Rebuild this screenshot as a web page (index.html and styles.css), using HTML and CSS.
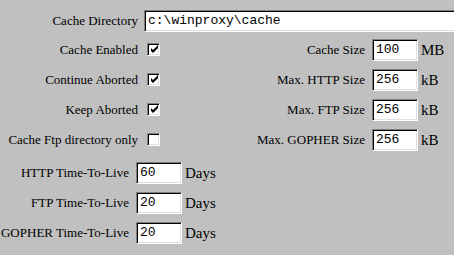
FILE: index.html
```html
<!DOCTYPE html>
<html>
<head>
<title>Cache Settings</title>
<link rel="stylesheet" href="styles.css">
</head>
<body>

<div class="panel">
    <div class="dir-row">
        <label class="label dir-label">Cache Directory</label>
        <div class="field dir-field">c:\winproxy\cache</div>
    </div>

    <div class="options">
        <label class="label">Cache Enabled</label>
        <span class="check on"><svg width="9" height="9" viewBox="0 0 9 9"><path d="M1 3v3l2 2 5-5V0L3 5z" fill="#000"/></svg></span>
        <label class="label">Cache Size</label>
        <div class="field size">100</div>
        <span class="unit">MB</span>

        <label class="label">Continue Aborted</label>
        <span class="check on"><svg width="9" height="9" viewBox="0 0 9 9"><path d="M1 3v3l2 2 5-5V0L3 5z" fill="#000"/></svg></span>
        <label class="label">Max. HTTP Size</label>
        <div class="field size">256</div>
        <span class="unit">kB</span>

        <label class="label">Keep Aborted</label>
        <span class="check on"><svg width="9" height="9" viewBox="0 0 9 9"><path d="M1 3v3l2 2 5-5V0L3 5z" fill="#000"/></svg></span>
        <label class="label">Max. FTP Size</label>
        <div class="field size">256</div>
        <span class="unit">kB</span>

        <label class="label">Cache Ftp directory only</label>
        <span class="check"></span>
        <label class="label">Max. GOPHER Size</label>
        <div class="field size">256</div>
        <span class="unit">kB</span>
    </div>

    <div class="ttl">
        <label class="label">HTTP Time-To-Live</label>
        <div class="field days">60</div>
        <span class="unit">Days</span>

        <label class="label">FTP Time-To-Live</label>
        <div class="field days">20</div>
        <span class="unit">Days</span>

        <label class="label">GOPHER Time-To-Live</label>
        <div class="field days">20</div>
        <span class="unit">Days</span>
    </div>
</div>

</body>
</html>
```

FILE: styles.css
```css
body {
    margin: 0;
    background: #c0c0c0;
    font-family: "Liberation Serif", "Times New Roman", serif;
    font-size: 13px;
    color: #000;
}
.panel {
    padding-top: 10px;
    width: 454px;
    overflow: hidden;
}
.label {
    text-align: right;
    white-space: nowrap;
}
.dir-row {
    display: flex;
    align-items: center;
    height: 22px;
}
.dir-label {
    width: 138px;
    flex: none;
}
.dir-field {
    margin-left: 6px;
    width: 330px;
    flex: none;
}
.field {
    box-sizing: border-box;
    height: 22px;
    background: #fff;
    border-top: 1px solid #808080;
    border-left: 1px solid #808080;
    border-right: 1px solid #fff;
    border-bottom: 1px solid #fff;
    box-shadow: inset 1px 1px 0 #000, inset -1px -1px 0 #dfdfdf;
    font-family: "Liberation Mono", "Courier New", monospace;
    font-size: 13px;
    line-height: 20px;
    padding-left: 3px;
    white-space: nowrap;
}
.options {
    margin-top: 3px;
    display: grid;
    grid-template-columns: 138px 22px 205px 53px auto;
    grid-auto-rows: 30px;
    align-items: center;
}
.check {
    justify-self: end;
    box-sizing: border-box;
    width: 13px;
    height: 13px;
    background: #fff;
    border-top: 1px solid #808080;
    border-left: 1px solid #808080;
    border-right: 1px solid #fff;
    border-bottom: 1px solid #fff;
    box-shadow: inset 1px 1px 0 #000, inset -1px -1px 0 #dfdfdf;
    display: flex;
    align-items: center;
    justify-content: center;
    margin-top: -2px;
}
.check svg {
    display: block;
    margin: 1px 0 0 1px;
}
.size {
    justify-self: end;
    width: 46px;
}
.unit {
    font-size: 15px;
    padding-left: 3px;
}
.ttl {
    margin-top: 3px;
    display: grid;
    grid-template-columns: 129px 7px 46px auto;
    grid-auto-rows: 30px;
    align-items: center;
}
.ttl .label {
    grid-column: 1;
}
.days {
    grid-column: 3;
}
.ttl .unit {
    grid-column: 4;
}
```
